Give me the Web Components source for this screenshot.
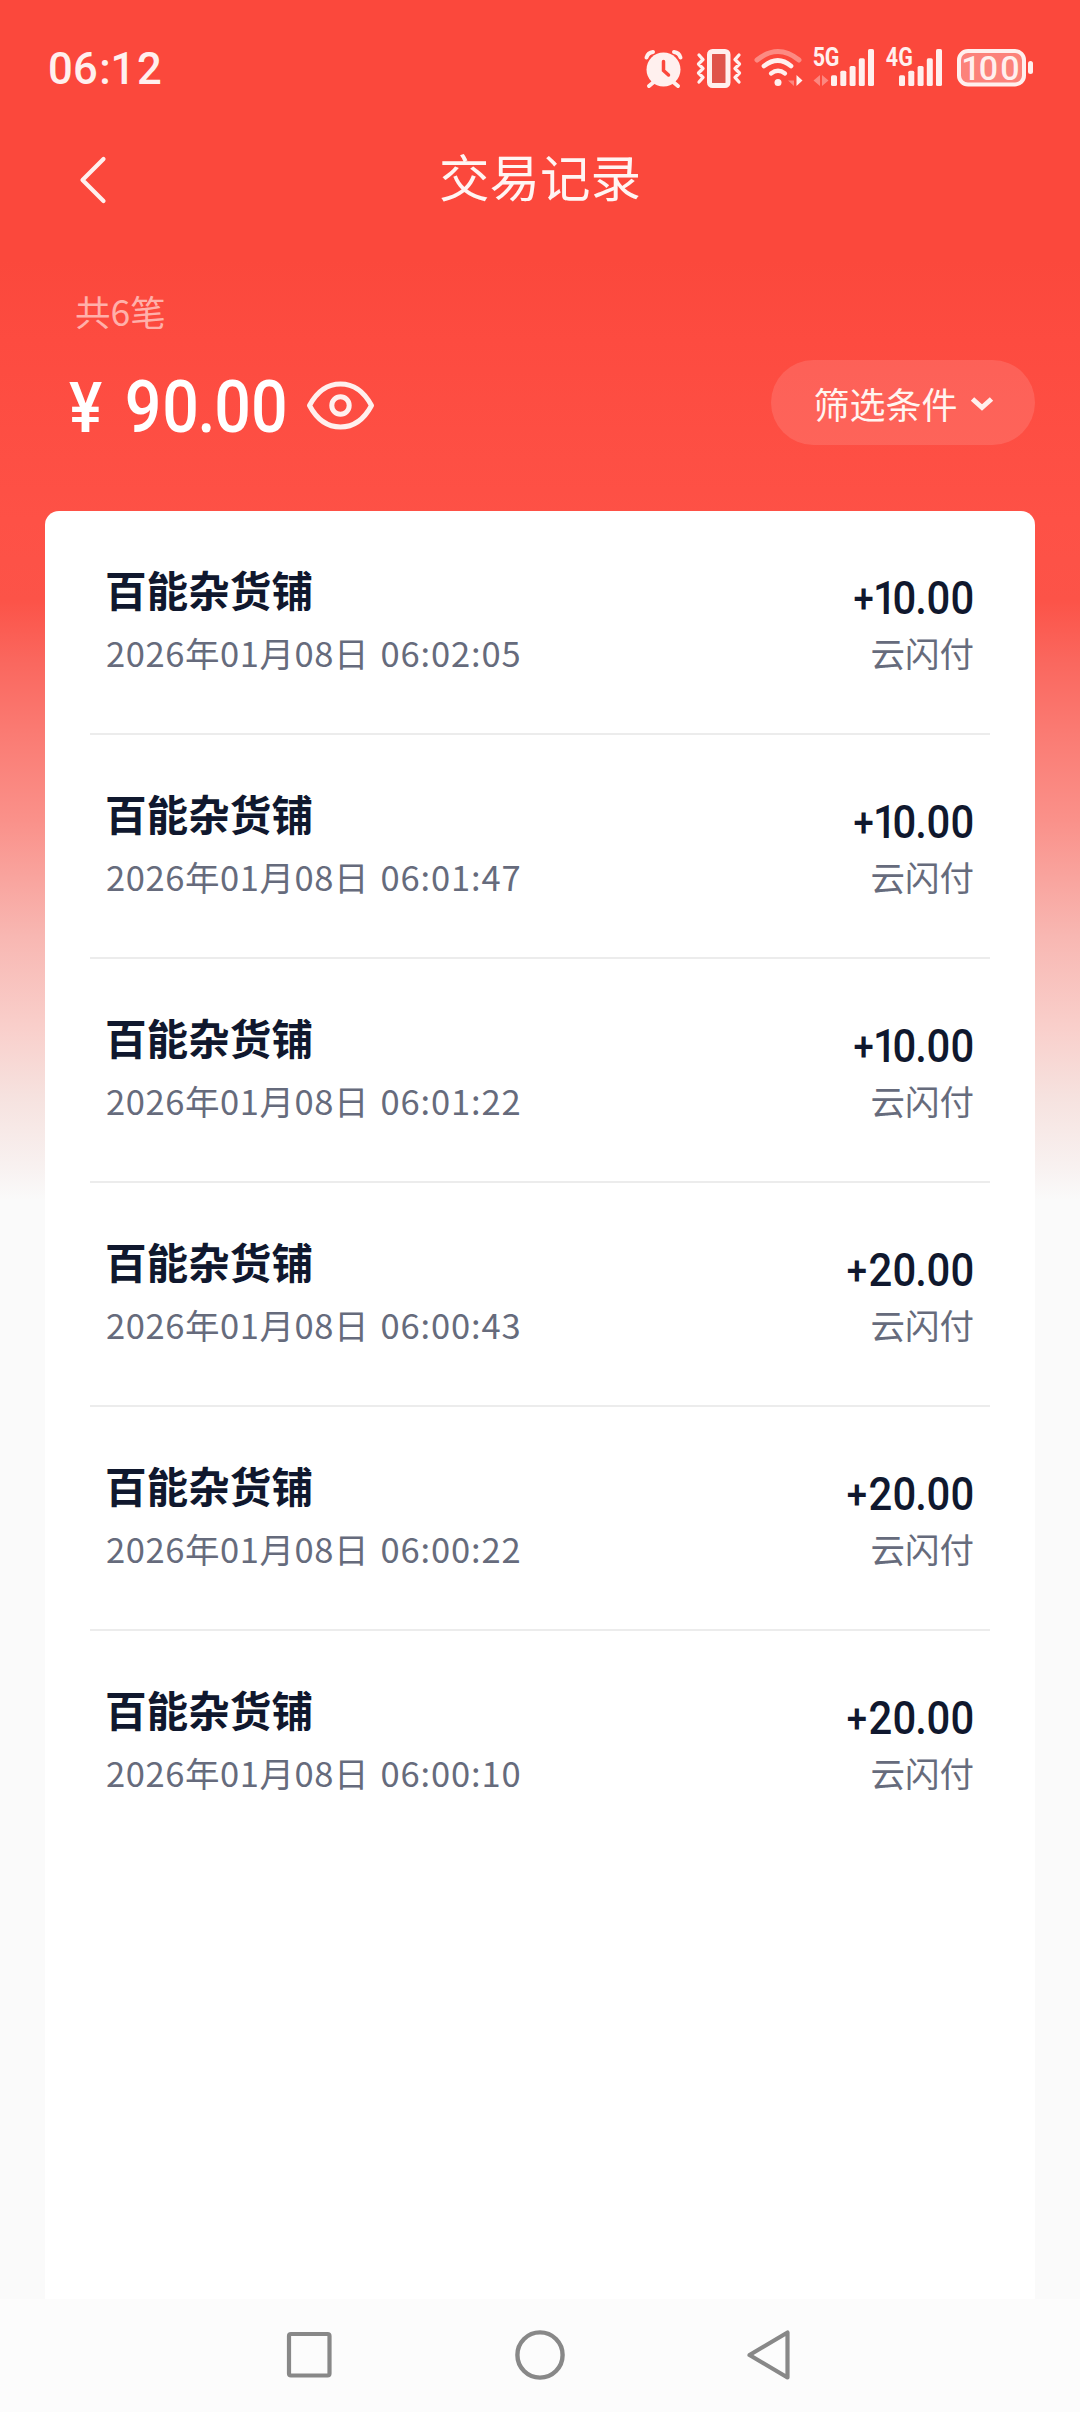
<!DOCTYPE html>
<html lang="zh-CN">
<head>
<meta charset="utf-8">
<title>交易记录</title>
<style>
html,body{margin:0;padding:0}
body{width:1080px;height:2412px;overflow:hidden;font-family:"Noto Sans CJK SC",sans-serif}
</style>
</head>
<body>
<records-page></records-page>
<script>
// Builds SVG text whose glyphs are centred on the given x positions.
function digits(value, centres, y, size, sx = 1, weight = 500, fill = '#fff') {
  const xs = centres.map(c => (c / sx).toFixed(2)).join(' ');
  return `<text x="${xs}" y="${y}" transform="scale(${sx} 1)" text-anchor="middle" font-family="Roboto, sans-serif" font-size="${size}" font-weight="${weight}" fill="${fill}">${value}</text>`;
}

class BaseElement extends HTMLElement {
  connectedCallback() {
    if (!this.shadowRoot) this.attachShadow({ mode: 'open' }).innerHTML = this.render();
  }
}

class StatusBar extends BaseElement {
  bars(x) {
    return [[0,10.7],[9.3,15.3],[18.6,20],[27.8,27.7],[37,37]]
      .map(([dx, h]) => `<rect x="${x + dx}" y="${86 - h}" width="6" height="${h}" rx="1.6" fill="#fff0ee"/>`).join('');
  }
  render() {
    return `<style>
      :host{display:flex;box-sizing:border-box;height:138px;justify-content:space-between;padding:0 46px 0 45px}
      svg{display:block;height:138px;overflow:visible}
      div{display:flex}
      .tray svg+svg{margin-left:var(--gap,10px)}
    </style>
    <svg width="125" viewBox="45 0 125 138">${digits('06:12', [60.5,85.5,105,123,149.5], 84, 45, .97, 500, '#fff0ee')}</svg>
    <div class="tray">
      <svg width="39" viewBox="644 0 39 138" stroke="#fff0ee" fill="none" stroke-linecap="round">
        <circle cx="663.5" cy="69.5" r="17" fill="#fff0ee" stroke="none"/>
        <path d="M655 81L649 86M672 81L678 86" stroke-width="4"/>
        <path d="M646.5 57.5Q648 52.500 653 52M674 52Q679 52.500 680.500 57.500" stroke-width="4"/>
        <path d="M663.500 61.500V70.500L668.500 75" stroke="#fb483c" stroke-width="3.500"/>
      </svg>
      <svg style="--gap:12px" width="47" viewBox="695 0 47 138" stroke="#fff0ee" fill="none" stroke-linecap="round" stroke-linejoin="round">
        <rect x="709.500" y="51.500" width="18.500" height="34" rx="3" stroke-width="5" fill="#df544b"/>
        <path d="M699 55L703 59.500L698.500 64L703 68.500L698.500 73L703 77.500L699 82M739 55L735 59.500L739.500 64L735 68.500L739.500 73L735 77.500L739 82" stroke-width="3.300"/>
      </svg>
      <svg style="--gap:12px" width="49" viewBox="754 0 49 138" stroke="#fff0ee" fill="none" stroke-linecap="round">
        <path d="M757 60Q778 43 799 60" stroke-width="5" opacity=".4"/>
        <path d="M764 66Q778 55 791 66" stroke-width="4.700"/>
        <path d="M771 73.500Q778 68 785 73.500" stroke-width="4.300"/>
        <circle cx="778" cy="82.500" r="3.500" fill="#fff0ee" stroke="none"/>
        <path d="M794 75V86L788 80.500H794Z" fill="#fff" opacity=".35" stroke="none"/>
        <path d="M796.500 75L802.500 80.500L796.500 86Z" fill="#fff0ee" stroke="none"/>
      </svg>
      <svg width="62" viewBox="813 0 62 138">
        ${digits('5G', [819,832], 66.500, 25, .86, 700, '#fff0ee')}
        <path d="M820 75V86L813.500 80.500ZM822 75L828.500 80.500L822 86Z" fill="#fff" opacity=".35"/>${this.bars(831)}
      </svg>
      <svg width="58" viewBox="885 0 58 138">${digits('4G', [892,905.5], 66.500, 25, .86, 700, '#fff0ee')}${this.bars(899)}</svg>
      <svg style="--gap:13px" width="78" viewBox="956 0 78 138">
        <rect x="959" y="51" width="65" height="33.500" rx="9" fill="#fff" fill-opacity=".32" stroke="#fff0ee" stroke-width="4"/>
        <rect x="1028" y="61" width="5" height="13" rx="2.500" fill="#fff0ee"/>
        ${digits('100', [971,988.5,1010], 80, 34, 1, 500, '#fff0ee')}
      </svg>
    </div>`;
  }
}

class TitleBar extends BaseElement {
  render() {
    return `<style>
      :host{display:grid;grid-template-columns:110px 1fr 110px;align-items:center;height:84px;color:#fff5f3}
      svg{display:block;margin-left:78px}
      h1{margin:0;padding-bottom:10px;text-align:center;font-size:50.500px;font-weight:400;line-height:74px}
    </style>
    <svg width="32" height="52" viewBox="78 154 32 52" fill="none" stroke="#fff0ee" stroke-width="4.200" stroke-linecap="round" stroke-linejoin="round"><path d="M103.500 159L82.500 180L103.500 201"/></svg>
    <h1><slot></slot></h1>`;
  }
}

class TotalSummary extends BaseElement {
  render() {
    return `<style>
      :host{display:flex;flex-direction:column;box-sizing:border-box;height:289px;padding:63px 45px 0 68px;color:#fff}
      .count{font-size:35.500px;line-height:52px;padding-left:7px;color:#ffb0aa}
      .line{display:flex;justify-content:space-between;align-items:center;height:85px;margin-top:23px}
      .sum{display:flex;align-items:center}
      svg{display:block}
    </style>
    <div class="count">${this.getAttribute('count')}</div>
    <div class="line">
      <div class="sum">
        <svg width="232" height="105" viewBox="68 350 232 105">${digits('¥', [85.5], 432, 71, .88)}${digits('90.00', [143,180.7,206.5,232.7,269.3], 432, 72.500, .89)}</svg>
        <svg width="80" height="85" viewBox="300 360 80 85" fill="none" stroke="#fff0ee" stroke-width="5" stroke-linejoin="round"><path d="M309.500 405.500Q321 384 340.500 384Q360 384 371.500 405.500Q360 427 340.500 427Q321 427 309.500 405.500Z"/><circle cx="340.500" cy="405.500" r="8.700"/></svg>
      </div>
      <filter-button>筛选条件</filter-button>
    </div>`;
  }
}

class FilterButton extends BaseElement {
  render() {
    return `<style>
      :host{display:flex;box-sizing:border-box;width:264.500px;height:85px;align-items:center;gap:12px;padding-left:43px;border-radius:43px;background:rgba(255,255,255,.12);font-size:36px;line-height:84px;color:#fff5f0}
      svg{display:block}
    </style><span><slot></slot></span>
    <svg width="24" height="20" viewBox="0 0 24 20" fill="none" stroke="#fff0ee" stroke-width="5"><path d="M2.500 6L12 14.500L21.500 6"/></svg>`;
  }
}

class TransactionRow extends BaseElement {
  render() {
    const amount = this.getAttribute('amount');
    const centres = amount[1] === '1' ? [19.7,41,60.500,77,94.300,118.500] : [13,36.300,60.500,77,94.300,118.500];
    const label = `<tspan font-size="41" dy="-1.5">+</tspan><tspan dy="1.5">${amount.slice(1)}</tspan>`;
    return `<style>
      :host{display:flex;justify-content:space-between;box-sizing:border-box;height:224px;margin:0 45px;padding:0 16px;border-bottom:2px solid #ececec}
      :host(:last-child){border-bottom-color:transparent}
      .name{padding-top:47px;font-size:41.600px;line-height:62px;font-weight:700;color:#10182e;margin-left:-1px}
      .time{margin-top:2px;font-size:34.500px;line-height:60px;letter-spacing:.58px;word-spacing:3px;color:#666b7c;white-space:nowrap}
      .time span{letter-spacing:.9px}
      .right{display:flex;flex-direction:column;align-items:flex-end}
      svg{display:block;margin-top:55px}
      .method{font-size:34.500px;line-height:60px;margin-top:-6px;color:#666b7c}
    </style>
    <div><div class="name"><slot></slot></div><div class="time">${this.getAttribute('date')} <span>${this.getAttribute('time')}</span></div></div>
    <div class="right"><svg width="134" height="62" viewBox="-4 -5 134 62">${digits(label, centres, 43.500, 47, .89, 500, '#10182e')}</svg>
    <div class="method">云闪付</div></div>`;
  }
}

class TransactionList extends BaseElement {
  render() {
    return `<style>:host{display:block;height:1788px;margin:0 45px;border-radius:14px 14px 0 0;background:#fff}</style><slot></slot>`;
  }
}

class NavigationBar extends BaseElement {
  render() {
    return `<style>
      :host{display:flex;justify-content:space-between;align-items:center;box-sizing:border-box;height:113px;padding:0 284px 2px;background:#fcfcfc}
      svg{display:block}
    </style>
    <svg width="50" height="54" viewBox="284 2328 50 54" fill="none" stroke="#888" stroke-width="4.200"><rect x="289" y="2334" width="40.500" height="41.500" rx="2"/></svg>
    <svg width="54" height="54" viewBox="513 2328 54 54" fill="none" stroke="#888" stroke-width="4.400"><circle cx="540" cy="2355" r="22.600"/></svg>
    <svg width="50" height="54" viewBox="746 2328 50 54" fill="none" stroke="#888" stroke-width="4.200" stroke-linejoin="round"><path d="M749.500 2355L787.500 2332.500V2377.500Z"/></svg>`;
  }
}

class RecordsPage extends BaseElement {
  render() {
    const rows = [
      ['06:02:05','+10.00'],['06:01:47','+10.00'],['06:01:22','+10.00'],
      ['06:00:43','+20.00'],['06:00:22','+20.00'],['06:00:10','+20.00']
    ].map(([t, a]) => `<transaction-row date="2026年01月08日" time="${t}" amount="${a}">百能杂货铺</transaction-row>`).join('');
    return `<style>
      :host{display:flex;flex-direction:column;width:1080px;height:2412px;background:linear-gradient(#fb483c 0,#fb483c 260px,#fd4b40 340px,#fe5146 520px,#fc5348 600px,#fa675e 661px,#fa7a72 730px,#fa918a 821px,#f8b7b2 936px,#f9cfcb 1028px,#f6e2df 1097px,#f8f1f0 1166px,#fafafa 1200px,#fafafa 100%)}
    </style>
    <status-bar></status-bar>
    <title-bar>交易记录</title-bar>
    <total-summary count="共6笔"></total-summary>
    <transaction-list>${rows}</transaction-list>
    <navigation-bar></navigation-bar>`;
  }
}

customElements.define('status-bar', StatusBar);
customElements.define('title-bar', TitleBar);
customElements.define('filter-button', FilterButton);
customElements.define('total-summary', TotalSummary);
customElements.define('transaction-row', TransactionRow);
customElements.define('transaction-list', TransactionList);
customElements.define('navigation-bar', NavigationBar);
customElements.define('records-page', RecordsPage);
</script>
</body>
</html>
